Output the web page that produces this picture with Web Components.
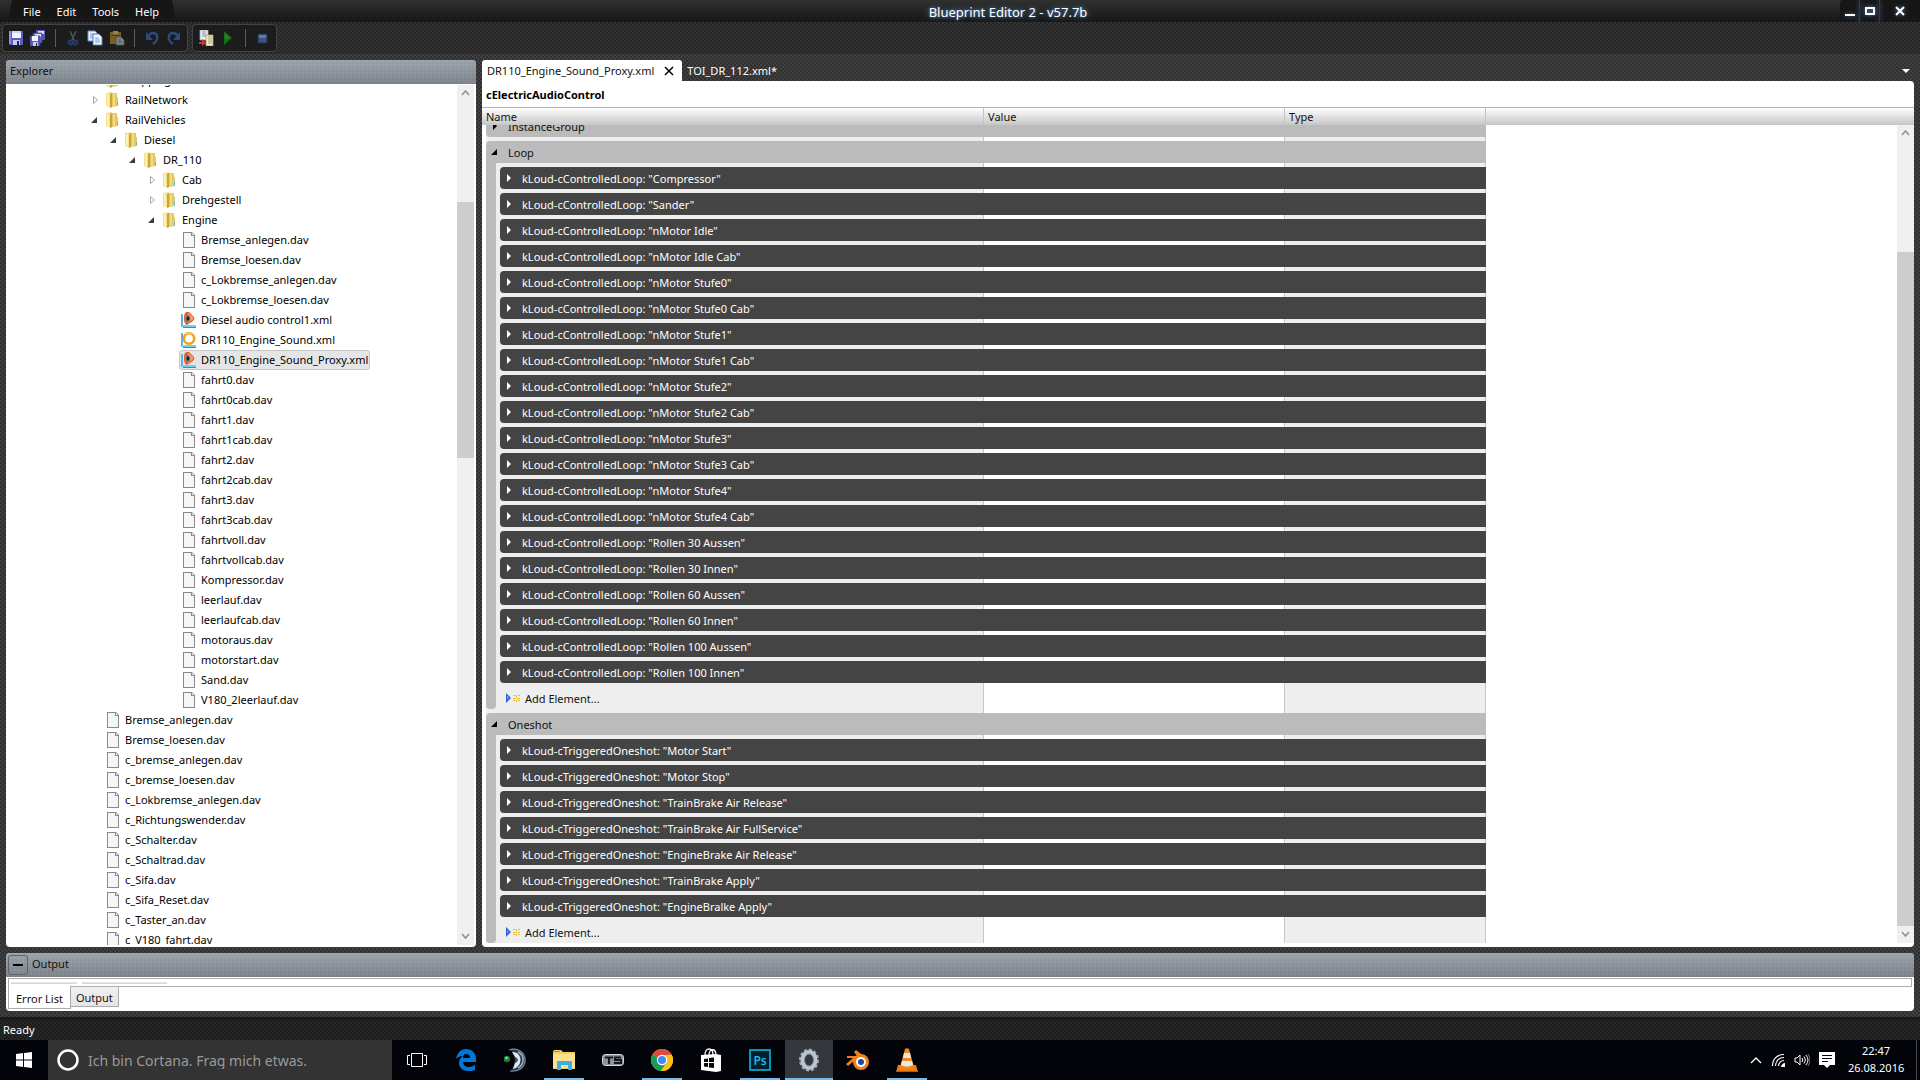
<!DOCTYPE html>
<html lang="de">
<head>
<meta charset="utf-8">
<title>Blueprint Editor 2 - v57.7b</title>
<style>
    html, body {
        margin: 0;
        height: 100%;
        overflow: hidden;
        background: #333;
    }
</style>
</head>
<body>
<be-app></be-app>

<script>
const ICONS = {
    save: `<svg viewBox="0 0 16 16"><path d="M1 1h14v14H2l-1-1z" fill="#5a5cc4"/><path d="M1 1h2v13H1z" fill="#8d8fe6"/><path d="M4 1h9v7H4z" fill="#f2f4ff"/><path d="M4 1h9v2H4z" fill="#cfd4f6"/><path d="M5 10h7v5H5z" fill="#c8cdf0"/><path d="M9 11h2v4H9z" fill="#23234f"/></svg>`,
    saveall: `<svg viewBox="0 0 16 16"><path d="M6 0h9v10H6z" fill="#5658b8"/><path d="M8 1h6v3H8z" fill="#dfe2fb"/><path d="M3 3h9v10H3z" fill="#6a6cce" stroke="#34367e" stroke-width=".6"/><path d="M5 4h6v3H5z" fill="#dfe2fb"/><path d="M0 6h10v10H0z" fill="#5a5cc4" stroke="#34367e" stroke-width=".6"/><path d="M2 6h6v5H2z" fill="#f2f4ff"/><path d="M3 12h5v4H3z" fill="#c8cdf0"/><path d="M6 13h1v3H6z" fill="#23234f"/></svg>`,
    cut: `<svg viewBox="0 0 16 16"><path d="M5 1l4 9M11 1l-4 9" stroke="#4d5156" stroke-width="1.600" fill="none"/><circle cx="5.500" cy="12.500" r="2" fill="none" stroke="#263c6a" stroke-width="1.800"/><circle cx="10.500" cy="12.500" r="2" fill="none" stroke="#263c6a" stroke-width="1.800"/></svg>`,
    copy: `<svg viewBox="0 0 16 16"><path d="M1 1h7l2 2v8H1z" fill="#e9f0fb" stroke="#6d93c7"/><path d="M3 4h4M3 6h5M3 8h5" stroke="#7ba1d6"/><path d="M6 4h6l3 3v8H6z" fill="#f3f7fe" stroke="#4f7dbd"/><path d="M8 8h4M8 10h5M8 12h5" stroke="#6f9ad6"/></svg>`,
    paste: `<svg viewBox="0 0 16 16"><path d="M1 2h11v12H1z" fill="#7a5f24"/><path d="M4 1h5v3H4z" fill="#8b8670"/><path d="M2 5h9v1H2z" fill="#513e16"/><path d="M7 7h5l3 3v5H7z" fill="#84898f" stroke="#4a5057"/><path d="M9 10h3M9 12h4" stroke="#464c54"/></svg>`,
    undo: `<svg viewBox="0 0 16 16"><path d="M4 6c3-4 8-4 9 0 1 3-1 6-4 8" fill="none" stroke="#2b4b80" stroke-width="2.400"/><path d="M2 2v8h7z" fill="#2b4b80"/></svg>`,
    redo: `<svg viewBox="0 0 16 16"><path d="M12 6C9 2 4 2 3 6c-1 3 1 6 4 8" fill="none" stroke="#2b4b80" stroke-width="2.400"/><path d="M14 2v8H7z" fill="#2b4b80"/></svg>`,
    compare: `<svg viewBox="0 0 16 16"><path d="M2 0h8v10H2z" fill="#eef1f8" stroke="#9aa5bd" stroke-width=".8"/><path d="M4 2h4M4 4h4M4 6h4" stroke="#7d8bab"/><path d="M8 5h7v11H8z" fill="#f4ecc4" stroke="#b39c55" stroke-width=".8"/><path d="M10 7h4M10 9h4M10 11h4M10 13h4" stroke="#a8a184"/><path d="M1 7v5h3V9l4 4-4 3v-2H1z" fill="#d33636"/></svg>`,
    play: `<svg viewBox="0 0 16 16"><path d="M4 1l8 7-8 7z" fill="#1a6d17"/><path d="M5 4l5 4-5 1z" fill="#2c8926"/></svg>`,
    stop: `<svg viewBox="0 0 16 16"><path d="M3 4h9v9H3z" fill="#3d5283" stroke="#22335a"/><path d="M4 5h7v3H4z" fill="#6478a8"/></svg>`,
    folder: `<svg viewBox="0 0 16 16"><path d="M1 1l6-1v15l-1 1-5-2z" fill="#f5e08c"/><path d="M7 1h5v4h1v9l-6 1z" fill="#e6c85e"/><path d="M5 2l2-1v14l-2 1z" fill="#c9a53c"/><path d="M2 2h2v12l-2-1z" fill="#fbf0b8"/><path d="M8 2h2v12H8z" fill="#f1da80"/><path d="M12 10h1v3h-1z" fill="#5db4e0"/></svg>`,
    file: `<svg viewBox="0 0 16 16"><path d="M2 0h9l3 3v13H2z" fill="#888"/><path d="M3 1h7v3h3v11H3z" fill="#f5f6f7"/><path d="M11 1l2 2h-2z" fill="#fff"/></svg>`,
    sound: `<svg viewBox="0 0 16 16"><path d="M0 2h2v13H0z" fill="#5bb4dc"/><path d="M1 13h14v2H1z" fill="#6fd0f2"/><path d="M2 15h13v1H2z" fill="#5f7f92"/><path d="M4 1q2-2 4-1l5 5q1 2-1 4l-6 4q-3-1-3-6t1-6z" fill="#dd6433"/><path d="M7 1l5 4q1 2-1 3l-4 3z" fill="#f5a06e"/><ellipse cx="7" cy="6.500" rx="2.200" ry="3.200" fill="#6f6f78"/><ellipse cx="7" cy="6.500" rx="1.200" ry="2" fill="#1c1c20"/></svg>`,
    ring: `<svg viewBox="0 0 16 16"><path d="M0 1h2v14H0z" fill="#5bb4dc"/><path d="M1 13h14v2H1z" fill="#6fd0f2"/><path d="M2 15h13v1H2z" fill="#5f7f92"/><circle cx="8" cy="6.500" r="5.200" fill="#fff" stroke="#eda11c" stroke-width="2.600"/><path d="M4 3c2-2 5-2 7-1" fill="none" stroke="#ffd465"/></svg>`,
    open: `<svg viewBox="0 0 8 8"><path d="M7 1v6H1z" fill="currentColor"/></svg>`,
    closed: `<svg viewBox="0 0 8 8"><path d="M3 0l4 4-4 4z" fill="currentColor"/></svg>`,
    hollow: `<svg viewBox="0 0 8 8"><path d="M3.500.5L7.500 4l-4 3.500z" fill="#fff" stroke="#a6a6a6"/></svg>`,
    add: `<svg viewBox="0 0 14 10"><path d="M0 0l5 5-5 5z" fill="#2f62d9"/><path d="M1 3l2 2-2 1z" fill="#86a9f5"/><path d="M7 2h2v1H7zM10 2h1v2h-1zM12 2h2v1h-2zM7 5h2v1H7zM12 5h2v1h-2zM7 8h2V7H7zM10 7h1v2h-1zM12 7h2v1h-2z" fill="#e8bd2a"/><path d="M9 4h3v3H9z" fill="#f7e28a"/></svg>`,
    up: `<svg viewBox="0 0 9 9"><path d="M1 6l3.500-4L8 6" fill="none" stroke="#909090" stroke-width="1.500"/></svg>`,
    down: `<svg viewBox="0 0 9 9"><path d="M1 2l3.500 4L8 2" fill="none" stroke="#909090" stroke-width="1.500"/></svg>`,
    minimize: `<svg viewBox="0 0 12 12"><path d="M1 9h10v2H1z" fill="#fff"/></svg>`,
    maximize: `<svg viewBox="0 0 12 12"><path d="M2 3h8v6H2z" fill="#31496b" stroke="#fff" stroke-width="2"/></svg>`,
    close: `<svg viewBox="0 0 12 12"><path d="M2 2l8 8M10 2l-8 8" stroke="currentColor" stroke-width="2"/></svg>`,
    closetab: `<svg viewBox="0 0 12 12"><path d="M2 2l8 8M10 2l-8 8" stroke="currentColor" stroke-width="1.500"/></svg>`,
    arrowdown: `<svg viewBox="0 0 8 4"><path d="M0 0h8L4 4z" fill="#fff"/></svg>`,
    minus: `<svg viewBox="0 0 10 10"><path d="M0 4h10v2H0z" fill="#000"/></svg>`,
    windows: `<svg viewBox="0 0 16 16"><path d="M0 2l7-1v6.500H0zM8 1l8-1v7.500H8zM0 8.500h7V15l-7-1zM8 8.500h8V16l-8-1z" fill="#fff"/></svg>`,
    cortana: `<svg viewBox="0 0 22 22"><circle cx="11" cy="11" r="9.500" fill="none" stroke="#fff" stroke-width="2.500"/></svg>`,
    taskview: `<svg viewBox="0 0 20 14"><path d="M4.500.5h11v13h-11z" fill="none" stroke="#fff"/><path d="M3 2.500H.5v9H3M17 2.500h2.500v9H17" fill="none" stroke="#fff"/></svg>`,
    edge: `<svg viewBox="0 0 22 22"><path d="M1 10C2 4 6 0 11 0c6 0 10 4 10 10v3H8c0 3 3 5 6 5 2 0 4-1 6-2v5c-2 1-4 1-7 1-6 0-9-4-9-8 0-3 1-5 4-7-4 0-6 2-7 3zm7-1h7c0-2-1-4-3.500-4S8 7 8 9z" fill="#0078d7"/></svg>`,
    teamspeak: `<svg viewBox="0 0 24 24"><path d="M7 1c9-2 16 4 16 11S17 25 8 23l3-6q3-5 0-11z" fill="#27384e"/><path d="M6 2c9-3 16 3 16 10S16 24 7 23" fill="none" stroke="#75879d" stroke-width="1.200"/><path d="M9 4q5 0 7 3 3 5 0 10-2 3-6 4l2-6q1-3 0-6z" fill="#e3e8ee"/><path d="M15 4q6 3 5 9-1 5-5 7" fill="none" stroke="#9fb0c4" stroke-width="1.500"/><path d="M11 8q2 4 0 8l3-2q2-2 0-4z" fill="#41546c"/><circle cx="4" cy="11" r="3.200" fill="#1f7d34"/><circle cx="3.500" cy="10" r="1.200" fill="#9be8a3"/></svg>`,
    explorer: `<svg viewBox="0 0 22 20"><path d="M0 2l1-2h7l2 2h12v17H0z" fill="#f5ce62"/><path d="M0 4h22v14H0z" fill="#fde08b"/><path d="M1 1h6v1H1z" fill="#c48d20"/><path d="M4 11h15v9h-4v-5H8v5H4z" fill="#38b0ea"/></svg>`,
    ts: `<svg viewBox="0 0 22 12"><rect x=".5" y=".5" width="21" height="11" rx="3" fill="#8c929c" stroke="#d5d8dd"/><path d="M3 3.500h8M7 3.500V10M19 3.500h-6v2.500h6v3h-7" fill="none" stroke="#15171c" stroke-width="2"/></svg>`,
    chrome: `<svg viewBox="0 0 22 22"><circle cx="11" cy="11" r="11" fill="#fbc116"/><path d="M11 11L1.500 5.500A11 11 0 0 1 20.500 5.500L20 6h-9z" fill="#dd4b3c"/><path d="M1.500 5.500A11 11 0 0 0 10 22l6-9-5-2z" fill="#1a9b57"/><path d="M20.500 5.500A11 11 0 0 1 10 22l6-9V6z" fill="#fbc116"/><circle cx="11" cy="11" r="5.200" fill="#fff"/><circle cx="11" cy="11" r="4" fill="#4587f4"/></svg>`,
    store: `<svg viewBox="0 0 22 24"><path d="M5 7c0-8 8-8 8 0M9 7c0-7 7-7 7 0" fill="none" stroke="#fff" stroke-width="1.300"/><path d="M1 7l15-1 5 1v16l-5 1-15-2z" fill="#fff"/><path d="M4 11l4-.5V14H4zM9 10l5-.5V14H9zM4 15h4v4l-4-.5zM9 15h5v5l-5-.5z" fill="#05070c"/></svg>`,
    photoshop: `<svg viewBox="0 0 22 22"><path d="M1 1h20v20H1z" fill="#04202c" stroke="#08c0f0" stroke-width="1.500"/><text x="11" y="16" text-anchor="middle" font-size="12" font-weight="600" font-family="Open Sans, sans-serif" fill="#18c4f4">Ps</text></svg>`,
    gear: `<svg viewBox="0 0 24 24"><ellipse cx="12" cy="12" rx="8.500" ry="10" fill="none" stroke="#9aa7b5" stroke-width="3" stroke-dasharray="3 1.800"/><ellipse cx="12" cy="12" rx="6.500" ry="8" fill="none" stroke="#bcc6d0" stroke-width="4"/><ellipse cx="12" cy="12" rx="4.500" ry="6" fill="none" stroke="#7e8b99"/></svg>`,
    blender: `<svg viewBox="0 0 24 22"><path d="M10 1l9 7-2 10-8-2-1-4-6 5-2-2 7-6H1V7h10L8 3z" fill="#f0801f"/><circle cx="15" cy="13" r="8" fill="#f0801f"/><circle cx="15" cy="13" r="5" fill="#fff"/><circle cx="15" cy="13" r="3" fill="#15509b"/></svg>`,
    vlc: `<svg viewBox="0 0 22 24"><path d="M2 17h18l2 7H0z" fill="#ee7d11"/><path d="M9 1q2-1.500 4 0l5 18q-7 4-14 0z" fill="#f08a1e"/><path d="M8 5h6l1 5H7zM6 13h10l1 4q-6 3-12 0z" fill="#e9e9e9"/><path d="M0 23h22v1H0z" fill="#b95a06"/></svg>`,
    chevron: `<svg viewBox="0 0 12 8"><path d="M1 7l5-5 5 5" fill="none" stroke="#fff" stroke-width="1.300"/></svg>`,
    wifi: `<svg viewBox="0 0 14 14"><path d="M1.500 13C1.500 6 6 1.500 13 1.500M4.500 13c0-5 3.500-8.500 8.500-8.500M7.500 13c0-3 2.500-5.500 5.500-5.500" fill="none" stroke="#fff" stroke-width="1.200"/><path d="M10 14c0-2 2-4 4-4v4z" fill="#fff"/></svg>`,
    volume: `<svg viewBox="0 0 16 14"><path d="M1 5h2l3-3v10L3 9H1z" fill="none" stroke="#fff"/><path d="M8 5q1.500 2 0 4M10 3.500q3 3.500 0 7" fill="none" stroke="#fff"/><path d="M12 2q4 5 0 10" fill="none" stroke="#fff"/><path d="M14 1q4 6 0 12" fill="none" stroke="#777"/></svg>`,
    note: `<svg viewBox="0 0 16 16"><path d="M0 0h16v13h-5l-3 3-3-3H0z" fill="#fff"/><path d="M3 3.500h10M3 6.500h10M3 9.500h6" stroke="#05070c"/></svg>`,
};

/* Dotted backdrop shared by every dark surface of the window. */
const DOTS = `
    background-image:
        radial-gradient(circle at 1px 1px, rgba(255,255,255,0.08) 0 1px, transparent 1px),
        radial-gradient(circle at 3px 3px, rgba(255,255,255,0.08) 0 1px, transparent 1px);
    background-size: 4px 4px;
`;

const RESET = `
    * { box-sizing: border-box; }
    button {
        margin: 0;
        padding: 0;
        border: 0;
        background: none;
        color: inherit;
        font: inherit;
        text-align: left;
    }
`;

class BaseElement extends HTMLElement {

    constructor() {
        super();
        this.attachShadow({ mode: "open" });
    }

    connectedCallback() {
        this.shadowRoot.innerHTML = `<style>${RESET}</style>` + this.template();
        this.ready();
    }

    template() { return ''; }

    ready() { }
}

class BeIcon extends BaseElement {
    template() {
        const w = this.getAttribute('w') || 16;
        const h = this.getAttribute('h') || w;
        return `
        <style>
            :host { display: inline-flex; flex: none; width: ${w}px; height: ${h}px; }
            svg { display: block; width: 100%; height: 100%; }
        </style>
        ${ICONS[this.getAttribute('name')] || ''}`;
    }
}
customElements.define('be-icon', BeIcon);

class BeScrollbar extends BaseElement {
    template() {
        const [before, thumb, after] = this.getAttribute('parts').split(' ');
        return `
        <style>
            :host { display: flex; flex-direction: column; flex: none; width: 17px; background: #f0f0f0; }
            button { display: flex; align-items: center; justify-content: center; height: 17px; }
            .before { flex: ${before} 0 0; }
            .thumb { flex: ${thumb} 0 0; background: #cdcdcd; }
            .after { flex: ${after} 0 0; }
        </style>
        <button aria-label="Nach oben"><be-icon name="up" w="9"></be-icon></button>
        <div class="before"></div>
        <div class="thumb"></div>
        <div class="after"></div>
        <button aria-label="Nach unten"><be-icon name="down" w="9"></be-icon></button>`;
    }
}
customElements.define('be-scrollbar', BeScrollbar);

class BeTitlebar extends BaseElement {
    template() {
        return `
        <style>
            :host {
                display: flex;
                flex: none;
                height: 22px;
                color: #fff;
                background: linear-gradient(#303030, #171717);
                text-shadow: 0 0 6px #5d8fc4, 0 0 3px #41648a;
            }
            nav {
                display: flex;
                width: 168px;
                margin-left: 8px;
                padding-left: 7px;
                background: #161616;
                clip-path: polygon(4px 0, 164px 0, 168px 100%, 0 100%);
            }
            nav button { padding: 2px 8px 0; }
            h1 {
                flex: 1;
                margin: 0;
                padding-top: 2px;
                font: inherit;
                font-size: var(--title-size);
                line-height: 20px;
                text-align: center;
            }
            .controls { display: flex; background: #161616; border-radius: 3px 0 0 0; }
            .controls button {
                display: flex;
                align-items: center;
                justify-content: center;
                width: 20px;
                border-right: 1px solid #383838;
                filter: drop-shadow(0 0 2px #4f7cab);
            }
            .controls button:last-child { width: 40px; border: 0; }
        </style>
        <nav>
            <button>File</button><button>Edit</button><button>Tools</button><button>Help</button>
        </nav>
        <h1>Blueprint Editor 2 - v57.7b</h1>
        <div class="controls">
            <button aria-label="Minimieren"><be-icon name="minimize" w="12"></be-icon></button>
            <button aria-label="Maximieren"><be-icon name="maximize" w="12"></be-icon></button>
            <button aria-label="Schließen"><be-icon name="close" w="12"></be-icon></button>
        </div>`;
    }
}
customElements.define('be-titlebar', BeTitlebar);

/* items: icon names, "|" draws a separator */
class BeToolgroup extends BaseElement {
    template() {
        const items = this.getAttribute('items').split(' ');
        return `
        <style>
            :host {
                display: flex;
                align-items: center;
                height: 28px;
                padding: 0 2px;
                border: 1px solid #434343;
                border-radius: 4px;
                background: #1c1c1c;
            }
            button { display: flex; align-items: center; justify-content: center; width: 22px; height: 22px; }
            i { width: 1px; height: 18px; margin: 0 6px; background: #5c5c5c; }
        </style>
        ${items.map(n => n === '|' ? '<i></i>' : `<button aria-label="${n}"><be-icon name="${n}"></be-icon></button>`).join('')}`;
    }
}
customElements.define('be-toolgroup', BeToolgroup);

class BePanel extends BaseElement {
    template() {
        return `
        <style>
            :host { display: flex; flex-direction: column; min-height: 0; border-radius: 4px; overflow: hidden; background: #fff; }
            header {
                display: flex;
                align-items: center;
                gap: 4px;
                flex: none;
                height: 24px;
                padding: 0 4px 2px;
                color: #111;
                background-image:
                    radial-gradient(circle at 1px 1px, rgba(255,255,255,0.06) 0 1px, transparent 1px),
                    linear-gradient(#9aa2ab, #7c8289);
                background-size: 4px 4px, 100% 100%;
            }
            h2 { margin: 0; font: inherit; }
            slot:not([name]) { display: flex; flex: 1; min-height: 0; }
        </style>
        <header><slot name="tool"></slot><h2>${this.getAttribute('heading')}</h2></header>
        <slot></slot>`;
    }
}
customElements.define('be-panel', BePanel);

class BeTreeItem extends BaseElement {
    template() {
        const icon = this.getAttribute('icon');
        const state = this.getAttribute('state');
        return `
        <style>
            :host { display: flex; align-items: center; height: 20px; padding-left: calc(78px + 19px * ${this.getAttribute('level')}); color: #000; }
            .toggle { display: flex; justify-content: center; width: 19px; color: #3c3c3c; }
            .label {
                display: flex;
                align-items: center;
                gap: 4px;
                height: 20px;
                padding: 0 1px;
                border: 1px solid transparent;
                border-radius: 3px;
                white-space: nowrap;
            }
            :host([selected]) .label { background: #e5e5e5; border-color: #c6c6c6; }
        </style>
        ${state ? `<button class="toggle" aria-label="${state}"><be-icon name="${state}" w="8"></be-icon></button>` : '<span class="toggle"></span>'}
        <button class="label"><be-icon name="${icon}"></be-icon><slot></slot></button>`;
    }
}
customElements.define('be-tree-item', BeTreeItem);

const FILES = [
    [0, 'folder', 'hollow', 'Mapping'],
    [0, 'folder', 'hollow', 'RailNetwork'],
    [0, 'folder', 'open', 'RailVehicles'],
    [1, 'folder', 'open', 'Diesel'],
    [2, 'folder', 'open', 'DR_110'],
    [3, 'folder', 'hollow', 'Cab'],
    [3, 'folder', 'hollow', 'Drehgestell'],
    [3, 'folder', 'open', 'Engine'],
    ...['Bremse_anlegen.dav', 'Bremse_loesen.dav', 'c_Lokbremse_anlegen.dav', 'c_Lokbremse_loesen.dav'].map(n => [4, 'file', '', n]),
    [4, 'sound', '', 'Diesel audio control1.xml'],
    [4, 'ring', '', 'DR110_Engine_Sound.xml'],
    [4, 'sound', '', 'DR110_Engine_Sound_Proxy.xml', true],
    ...['fahrt0.dav', 'fahrt0cab.dav', 'fahrt1.dav', 'fahrt1cab.dav', 'fahrt2.dav', 'fahrt2cab.dav', 'fahrt3.dav',
        'fahrt3cab.dav', 'fahrtvoll.dav', 'fahrtvollcab.dav', 'Kompressor.dav', 'leerlauf.dav', 'leerlaufcab.dav',
        'motoraus.dav', 'motorstart.dav', 'Sand.dav', 'V180_2leerlauf.dav'].map(n => [4, 'file', '', n]),
    ...['Bremse_anlegen.dav', 'Bremse_loesen.dav', 'c_bremse_anlegen.dav', 'c_bremse_loesen.dav', 'c_Lokbremse_anlegen.dav',
        'c_Richtungswender.dav', 'c_Schalter.dav', 'c_Schaltrad.dav', 'c_Sifa.dav', 'c_Sifa_Reset.dav', 'c_Taster_an.dav',
        'c_V180_fahrt.dav'].map(n => [0, 'file', '', n]),
];

class BeFileTree extends BaseElement {
    template() {
        return `
        <style>
            :host { display: flex; flex: 1; min-height: 0; padding: 1px 2px 2px 0; }
            .items { flex: 1; min-width: 0; overflow: hidden; }
        </style>
        <div class="items">
            ${FILES.map(([level, icon, state, name, sel]) =>
                `<be-tree-item level="${level}" icon="${icon}" state="${state}" ${sel ? 'selected' : ''}>${name}</be-tree-item>`).join('')}
        </div>
        <be-scrollbar parts="100 256 470"></be-scrollbar>`;
    }

    restoreScroll() {
        this.shadowRoot.querySelector('.items').scrollTop = 15;
    }
}
customElements.define('be-file-tree', BeFileTree);

class BePropertyRow extends BaseElement {
    template() {
        return `
        <style>
            :host { display: block; }
            button {
                display: flex;
                align-items: center;
                gap: 10px;
                width: 100%;
                height: 22px;
                padding-left: 4px;
                border-radius: 4px 0 0 4px;
                background: #444;
                color: #fff;
            }
            span { padding-top: 2px; }
        </style>
        <button><be-icon name="closed" w="8"></be-icon><span><slot></slot></span></button>`;
    }
}
customElements.define('be-property-row', BePropertyRow);

class BePropertyGroup extends BaseElement {
    template() {
        const open = this.hasAttribute('open');
        return `
        <style>
            :host { display: grid; grid-template-columns: 10px 1fr; color: #111; }
            .head {
                grid-column: 1 / -1;
                display: flex;
                align-items: center;
                gap: 10px;
                height: 22px;
                padding-left: 4px;
                border-radius: 4px 0 0 ${open ? '0' : '4px'};
                background: #bbb;
            }
            span { padding-top: 2px; }
            .head be-icon { color: #000; }
            .stripe { background: #bbb; border-radius: 0 0 4px 4px; }
            .body { display: flex; flex-direction: column; gap: 4px; padding: 4px 0 0 4px; }
            .add { display: flex; align-items: center; gap: 5px; height: 22px; padding-left: 6px; }
        </style>
        <button class="head"><be-icon name="${open ? 'open' : 'closed'}" w="8"></be-icon><span>${this.getAttribute('name')}</span></button>
        ${open ? `
        <div class="stripe"></div>
        <div class="body">
            <slot></slot>
            <button class="add"><be-icon name="add" w="14" h="10"></be-icon><span>Add Element...</span></button>
        </div>` : ''}`;
    }
}
customElements.define('be-property-group', BePropertyGroup);

const stufen = [0, 1, 2, 3, 4].flatMap(n => [`nMotor Stufe${n}`, `nMotor Stufe${n} Cab`]);
const rollen = [30, 60, 100].flatMap(n => [`Rollen ${n} Aussen`, `Rollen ${n} Innen`]);
const LOOPS = ['Compressor', 'Sander', 'nMotor Idle', 'nMotor Idle Cab', ...stufen, ...rollen];
const ONESHOTS = ['Motor Start', 'Motor Stop', 'TrainBrake Air Release', 'TrainBrake Air FullService',
    'EngineBrake Air Release', 'TrainBrake Apply', 'EngineBralke Apply'];

class BePropertyGrid extends BaseElement {
    template() {
        const rows = (type, names) => names.map(n => `<be-property-row>${type}: "${n}"</be-property-row>`).join('');
        return `
        <style>
            :host {
                --name: 498px;
                --value: 301px;
                --type: 201px;
                display: flex;
                flex-direction: column;
                flex: 1;
                min-height: 0;
                padding-bottom: 4px;
                background: #fff;
                border-radius: 0 4px 4px 4px;
                overflow: hidden;
            }
            h2 { height: 26px; margin: 0; padding: 0 4px; font: inherit; font-weight: bold; line-height: 28px; color: #000; }
            .columns {
                display: grid;
                grid-template-columns: var(--name) var(--value) var(--type);
                flex: none;
                height: 18px;
                padding-left: 4px;
                border-top: 1px solid #b5b5b5;
                background: linear-gradient(#fff, #c6c6c6);
                color: #111;
                line-height: 18px;
            }
            .columns span { border-right: 1px solid #c4c4c4; }
            .columns span + span { padding-left: 4px; }
            .view { display: flex; flex: 1; min-height: 0; padding-left: 4px; }
            .scroll { flex: 1; min-width: 0; overflow: hidden; }
            .groups {
                display: flex;
                flex-direction: column;
                gap: 4px;
                width: calc(var(--name) + var(--value) + var(--type));
                background:
                    linear-gradient(#c8c8c8, #c8c8c8) calc(var(--name) - 1px) 0 / 1px 100% no-repeat,
                    linear-gradient(#c8c8c8, #c8c8c8) calc(var(--name) + var(--value) - 1px) 0 / 1px 100% no-repeat,
                    linear-gradient(#c8c8c8, #c8c8c8) right / 1px 100% no-repeat,
                    linear-gradient(#fff, #fff) var(--name) 0 / var(--value) 100% no-repeat,
                    #eee;
            }
        </style>
        <h2>cElectricAudioControl</h2>
        <div class="columns"><span>Name</span><span>Value</span><span>Type</span></div>
        <div class="view">
            <div class="scroll">
                <div class="groups">
                    <be-property-group name="InstanceGroup"></be-property-group>
                    <be-property-group name="Loop" open>${rows('kLoud-cControlledLoop', LOOPS)}</be-property-group>
                    <be-property-group name="Oneshot" open>${rows('kLoud-cTriggeredOneshot', ONESHOTS)}</be-property-group>
                </div>
            </div>
            <be-scrollbar parts="110 674 0"></be-scrollbar>
        </div>`;
    }

    restoreScroll() {
        const scroll = this.shadowRoot.querySelector('.scroll');
        scroll.scrollTop = scroll.scrollHeight;
    }
}
customElements.define('be-property-grid', BePropertyGrid);

class BeDocument extends BaseElement {
    template() {
        return `
        <style>
            :host { display: flex; flex-direction: column; min-width: 0; min-height: 0; }
            .tabs { display: flex; flex: none; height: 21px; color: #fff; }
            .tab { display: flex; align-items: center; padding: 0 5px; }
            .tab.active { gap: 9px; padding-right: 7px; color: #111; background: #fff; border-radius: 3px 3px 0 0; }
            .tab.active > button:last-child { display: flex; color: #000; }
            .list { display: flex; align-items: center; margin-left: auto; padding: 0 4px; }
        </style>
        <div class="tabs">
            <div class="tab active"><button>DR110_Engine_Sound_Proxy.xml</button><button aria-label="Schließen"><be-icon name="closetab" w="12"></be-icon></button></div>
            <div class="tab"><button>TOI_DR_112.xml*</button></div>
            <button class="list" aria-label="Dokumente"><be-icon name="arrowdown" w="8" h="4"></be-icon></button>
        </div>
        <be-property-grid></be-property-grid>`;
    }

    restoreScroll() {
        this.shadowRoot.querySelector('be-property-grid').restoreScroll();
    }
}
customElements.define('be-document', BeDocument);

class BeOutput extends BaseElement {
    template() {
        return `
        <style>
            :host { display: block; flex: 1; padding: 1px 2px 2px; color: #111; }
            .pane { display: flex; gap: 5px; height: 9px; padding: 3px 2px 0; border: 1px solid #acacac; }
            .pane i { height: 2px; background: linear-gradient(#e4e4e4 50%, #bfdcf3 50%); }
            .pane i:first-child { width: 66px; }
            .pane i:last-child { width: 85px; }
            .tabs { display: flex; align-items: flex-start; margin-top: -1px; }
            button { border: 1px solid #acacac; padding: 2px 5px 0; height: 21px; line-height: 17px; background: linear-gradient(#f0f0f0, #e5e5e5); }
            .active { position: relative; height: 23px; padding: 2px 7px 0; border-top: 0; margin-right: -1px; background: #fff; }
        </style>
        <div class="pane"><i></i><i></i></div>
        <div class="tabs"><button class="active">Error List</button><button>Output</button></div>`;
    }
}
customElements.define('be-output', BeOutput);

class BeTask extends BaseElement {
    template() {
        return `
        <style>
            :host { display: flex; flex: none; width: 48px; }
            button { display: flex; flex: 1; align-items: center; justify-content: center; border-bottom: 2px solid transparent; border-top: 2px solid transparent; }
            :host([running]) button { margin: 0 4px; border-bottom-color: #76b9ed; }
            :host([active]) { background: #34383d; }
            :host([active]) button { margin: 0; }
        </style>
        <button aria-label="${this.getAttribute('name')}"><be-icon name="${this.getAttribute('name')}" w="${this.getAttribute('w')}" h="${this.getAttribute('h')}"></be-icon></button>`;
    }
}
customElements.define('be-task', BeTask);

class BeTaskbar extends BaseElement {
    template() {
        return `
        <style>
            :host { display: flex; flex: none; height: 40px; background: #020409; color: #fff; }
            .search { display: flex; align-items: center; gap: 9px; width: 344px; padding: 0 9px; background: #333; }
            input {
                flex: 1;
                min-width: 0;
                padding: 2px 0 0;
                border: 0;
                outline: 0;
                background: none;
                color: #fff;
                font: inherit;
                font-size: var(--search-size);
            }
            input::placeholder { color: #9a9a9a; opacity: 1; }
            .tasks { display: flex; flex: 1; gap: 1px; padding-left: 1px; }
            .tray { display: flex; align-items: center; gap: 9px; padding-right: 3px; }
            .tray button { display: flex; }
            .clock { width: 56px; margin: 0 3px 0 4px; padding-bottom: 2px; font-size: var(--clock-size); line-height: 17px; text-align: center; }
            .peek { width: 1px; height: 100%; background: #4a4c50; }
        </style>
        <be-task name="windows" w="16" h="16"></be-task>
        <label class="search"><be-icon name="cortana" w="22"></be-icon><input type="text" aria-label="Suche" placeholder="Ich bin Cortana. Frag mich etwas."></label>
        <div class="tasks">
            <be-task name="taskview" w="20" h="14"></be-task>
            <be-task name="edge" w="22" h="22"></be-task>
            <be-task name="teamspeak" w="24" h="24"></be-task>
            <be-task name="explorer" w="22" h="20" running></be-task>
            <be-task name="ts" w="22" h="12"></be-task>
            <be-task name="chrome" w="22" h="22" running></be-task>
            <be-task name="store" w="22" h="24"></be-task>
            <be-task name="photoshop" w="22" h="22" running></be-task>
            <be-task name="gear" w="24" h="24" running active></be-task>
            <be-task name="blender" w="24" h="22"></be-task>
            <be-task name="vlc" w="22" h="24" running></be-task>
        </div>
        <div class="tray">
            <button aria-label="Ausgeblendete Symbole"><be-icon name="chevron" w="12" h="8"></be-icon></button>
            <button aria-label="Netzwerk"><be-icon name="wifi" w="14"></be-icon></button>
            <button aria-label="Lautstärke"><be-icon name="volume" w="16" h="14"></be-icon></button>
            <button aria-label="Benachrichtigungen"><be-icon name="note" w="16"></be-icon></button>
            <div class="clock"><div>22:47</div><div>26.08.2016</div></div>
            <div class="peek"></div>
        </div>`;
    }
}
customElements.define('be-taskbar', BeTaskbar);

class BeApp extends BaseElement {
    template() {
        return `
        <style>
            :host {
                --title-size: 13px;
                --search-size: 14px;
                --clock-size: 11px;
                display: flex;
                flex-direction: column;
                height: 100vh;
                font: 11px/16px "Noto Sans", "Open Sans", sans-serif;
                ${DOTS}
                background-color: #303030;
            }
            .toolbar { display: flex; flex: none; gap: 4px; height: 32px; padding: 2px; background: rgba(0,0,0,0.2); }
            main {
                display: grid;
                grid-template: minmax(0, 1fr) 58px / 470px minmax(0, 1fr);
                gap: 6px;
                flex: 1;
                min-height: 0;
                padding: 6px;
            }
            .output { grid-column: 1 / -1; }
            .collapse {
                display: flex;
                align-items: center;
                justify-content: center;
                width: 20px;
                height: 20px;
                margin: 2px 0 0 -2px;
                border: 1px solid #5d636b;
                border-radius: 3px;
            }
            footer {
                flex: none;
                height: 23px;
                padding: 5px 3px 0;
                color: #fff;
                background: linear-gradient(rgba(0,0,0,0.6), rgba(0,0,0,0.4) 5px);
            }
        </style>
        <be-titlebar></be-titlebar>
        <div class="toolbar">
            <be-toolgroup items="save saveall | cut copy paste | undo redo"></be-toolgroup>
            <be-toolgroup items="compare play | stop"></be-toolgroup>
        </div>
        <main>
            <be-panel heading="Explorer"><be-file-tree></be-file-tree></be-panel>
            <be-document></be-document>
            <be-panel class="output" heading="Output">
                <button class="collapse" slot="tool" aria-label="Einklappen"><be-icon name="minus" w="10"></be-icon></button>
                <be-output></be-output>
            </be-panel>
        </main>
        <footer>Ready</footer>
        <be-taskbar></be-taskbar>`;
    }

    /* The panes only have their final height once the bars around them exist. */
    ready() {
        this.shadowRoot.querySelector('be-file-tree').restoreScroll();
        this.shadowRoot.querySelector('be-document').restoreScroll();
    }
}
customElements.define('be-app', BeApp);
</script>
</body>
</html>
